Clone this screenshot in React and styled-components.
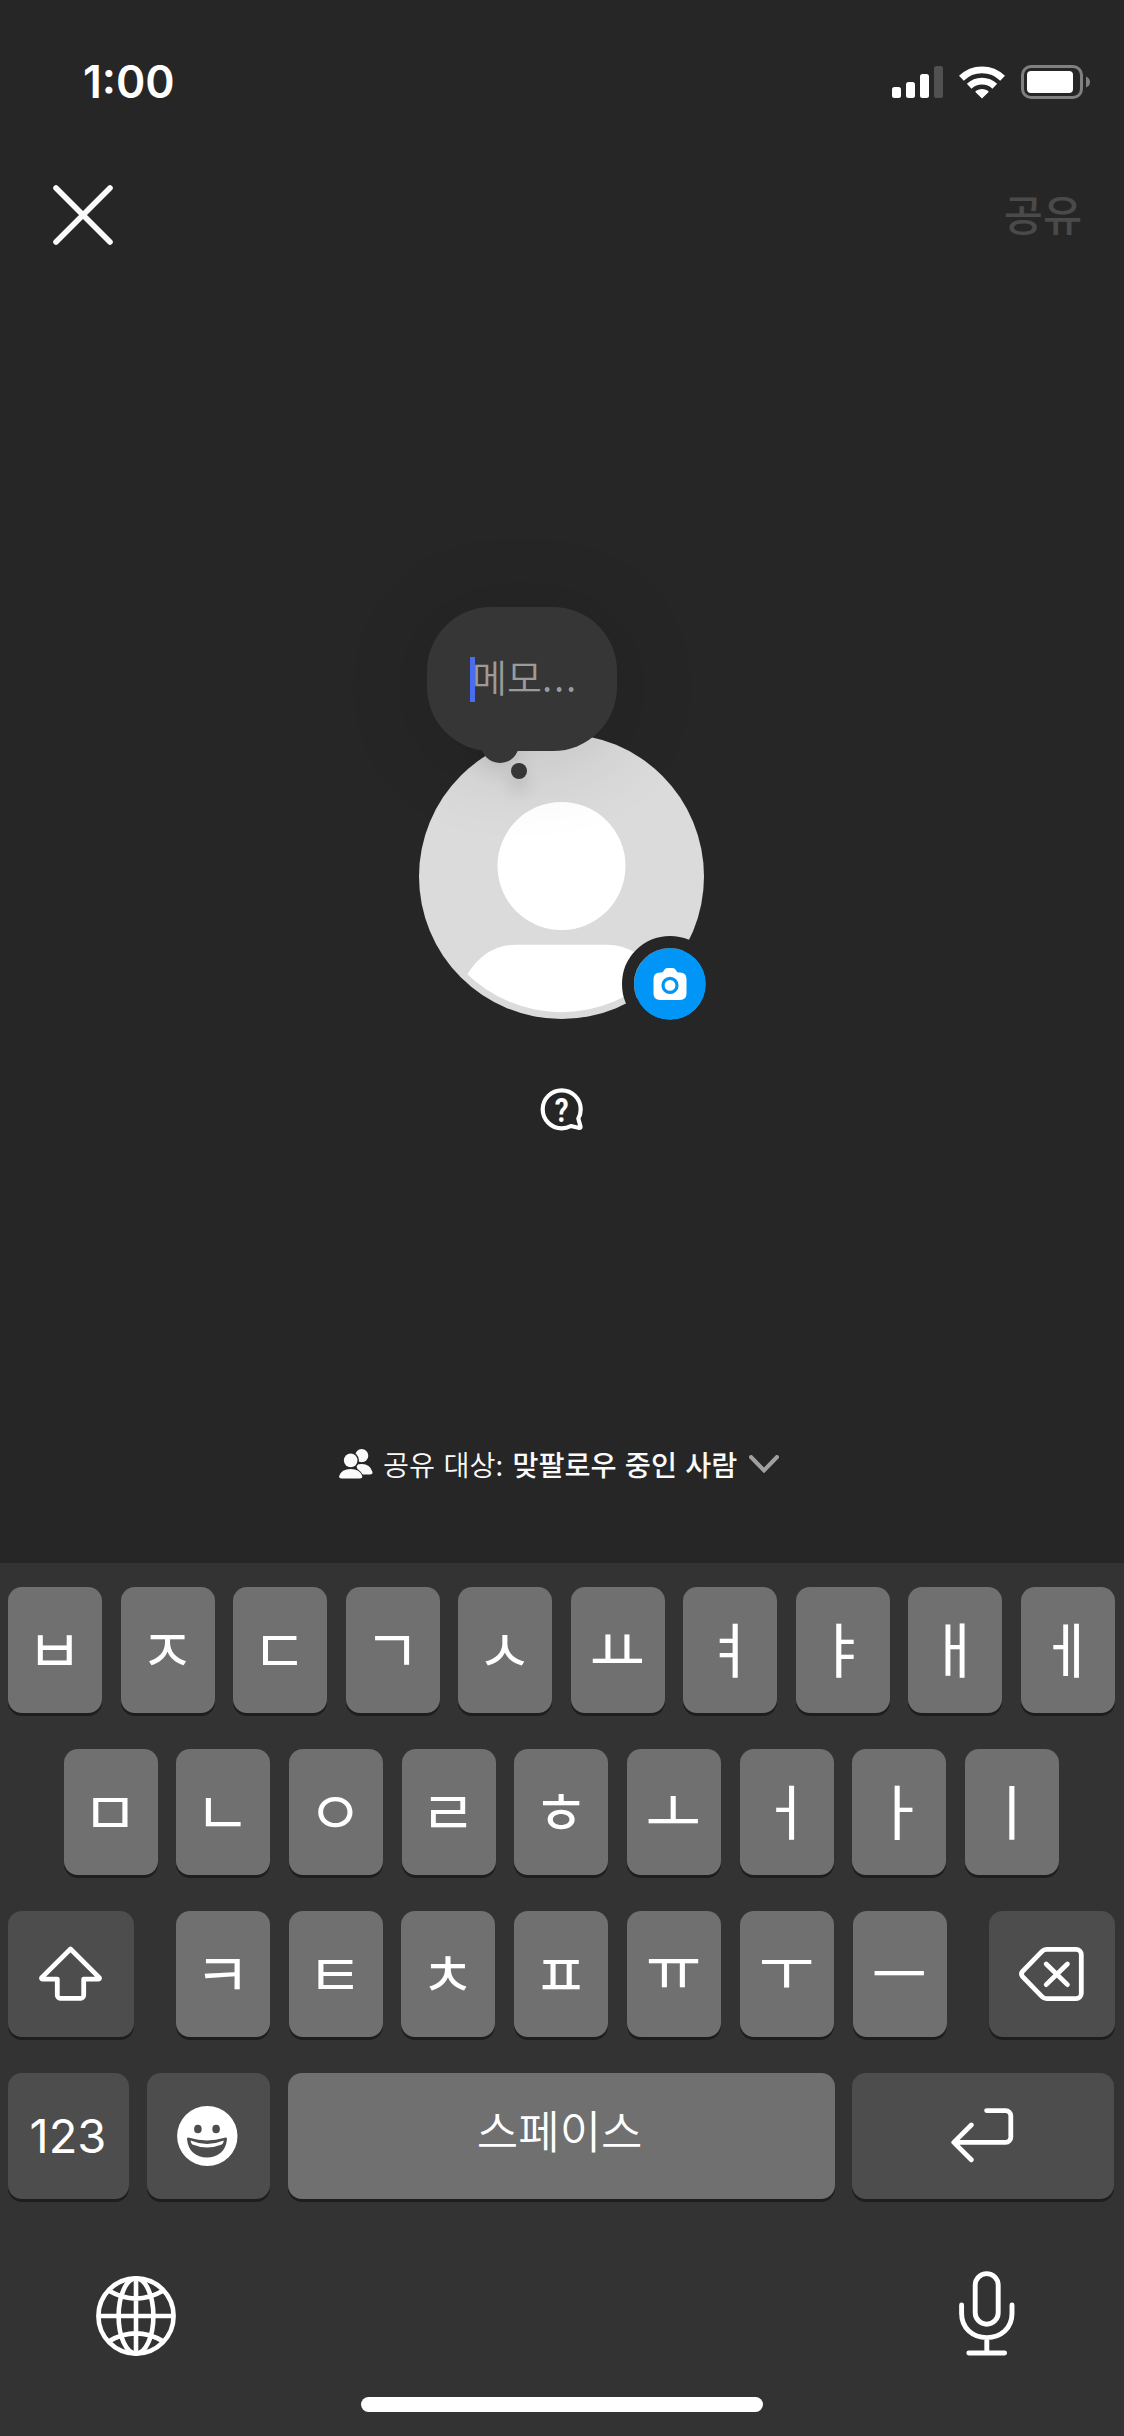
import styled, { createGlobalStyle } from 'styled-components';

const rowOne = ['ㅂ', 'ㅈ', 'ㄷ', 'ㄱ', 'ㅅ', 'ㅛ', 'ㅕ', 'ㅑ', 'ㅐ', 'ㅔ'];
const rowTwo = ['ㅁ', 'ㄴ', 'ㅇ', 'ㄹ', 'ㅎ', 'ㅗ', 'ㅓ', 'ㅏ', 'ㅣ'];
const rowThree = ['ㅋ', 'ㅌ', 'ㅊ', 'ㅍ', 'ㅠ', 'ㅜ', 'ㅡ'];
// vowels with a stem below the bar sit low in the font
const raised = ['ㅠ', 'ㅜ'];

const SignalIcon = () => (
  <svg width='51' height='32' viewBox='0 0 51 32' fill='#fff'>
    <rect x='0' y='21' width='9' height='11' rx='2.5' />
    <rect x='14' y='16' width='9' height='16' rx='2.5' />
    <rect x='28' y='8' width='9' height='24' rx='2.5' />
    <rect x='42' y='0' width='9' height='32' rx='2.5' fill='#515151' />
  </svg>
);

const WifiIcon = () => (
  <svg width='46' height='33' viewBox='0 0 46 33' fill='none'>
    <g stroke='#fff' strokeWidth='6.8'>
      <path d='M2.4 12.2A29.4 29.4 0 0 1 43.6 12.2' />
      <path d='M10.2 20.3A18.5 18.5 0 0 1 35.8 20.3' />
    </g>
    <path
      d='M23 32.5L16.6 26.3Q16 25.4 17 24.8Q23 21.2 29 24.8Q30 25.4 29.4 26.3Z'
      fill='#fff'
    />
  </svg>
);

const BatteryIcon = () => (
  <svg width='69' height='34' viewBox='0 0 69 34' fill='none'>
    <rect
      x='1.5'
      y='1.5'
      width='59'
      height='31'
      rx='8.5'
      stroke='#808080'
      strokeWidth='3'
    />
    <rect x='6' y='6' width='46' height='22' rx='4' fill='#fff' />
    <path d='M65 11.5Q69 13 69 17T65 22.5Z' fill='#808080' />
  </svg>
);

const CloseIcon = () => (
  <svg width='60' height='60' viewBox='0 0 60 60' fill='none'>
    <path
      d='M3 3L57 57M57 3L3 57'
      stroke='#fafafa'
      strokeWidth='5.6'
      strokeLinecap='round'
    />
  </svg>
);

const DefaultAvatar = () => (
  <svg width='285' height='285' viewBox='0 0 285 285'>
    <clipPath id='avatarInner'>
      <circle cx='142.5' cy='142.5' r='135.7' />
    </clipPath>
    <circle cx='142.5' cy='142.5' r='142.5' fill='#dbdbdb' />
    <circle cx='142.5' cy='132' r='64' fill='#fff' />
    <path
      clipPath='url(#avatarInner)'
      d='M48 241Q66 211 97 210.7H188Q219 211 237 241V285H48Z'
      fill='#fff'
    />
  </svg>
);

const CameraIcon = () => (
  <svg width='34' height='32' viewBox='0 0 34 32'>
    <path
      d='M7 4.5H8.2Q9.6 4.5 10.4 3.2L11 2.2Q12.2 0 14.6 0H19.4Q21.8 0 23 2.2L23.6 3.2Q24.4 4.5 25.8 4.5H27Q33.5 4.5 33.5 11V25.5Q33.5 32 27 32H7Q.5 32 .5 25.5V11Q.5 4.5 7 4.5Z'
      fill='#fff'
    />
    <circle cx='17' cy='17.4' r='7' fill='#fff' stroke='#0095f6' strokeWidth='3.2' />
  </svg>
);

const QuestionIcon = () => (
  <svg width='44' height='44' viewBox='0 0 44 44' fill='none'>
    <path
      d='M21.7 2.3A19 19 0 1 0 21.7 40.3Q26.5 40.3 30.9 38L39.5 40Q40.8 40 40.5 38.6L38.3 30.5Q40.7 26.6 40.7 21.3A19 19 0 0 0 21.7 2.3Z'
      stroke='#fff'
      strokeWidth='4.2'
      strokeLinejoin='round'
    />
    <text
      x='0'
      y='0'
      textAnchor='middle'
      transform='translate(21.7 33.6) scale(.82 1)'
      fontFamily='Roboto'
      fontWeight='700'
      fontSize='34'
      fill='#fff'
    >
      ?
    </text>
  </svg>
);

const PeopleIcon = () => (
  <svg width='34' height='30' viewBox='0 0 34 30' fill='#fafafa'>
    <circle cx='22.7' cy='6.7' r='6.6' />
    <path d='M17 15.5Q19 15 23 15Q31 15 33.4 22.8Q34 25.5 31 25.5H20Z' />
    <circle cx='11.7' cy='11.4' r='8.3' fill='#262626' />
    <path
      d='M0 27.2Q2.5 18.5 11.7 18.5Q20.8 18.5 24.6 27.2V30H0Z'
      fill='#262626'
    />
    <circle cx='11.7' cy='11.4' r='6.8' />
    <path d='M.2 27Q2.5 20 11.7 20T23.2 27Q23.8 29.6 21 29.6H2.4Q-.4 29.6 .2 27Z' />
  </svg>
);

const ChevronIcon = () => (
  <svg width='30' height='18' viewBox='0 0 30 18' fill='none'>
    <path
      d='M2 2L15 15.4L28 2'
      stroke='#a0a0a0'
      strokeWidth='4'
      strokeLinecap='round'
    />
  </svg>
);

const ShiftIcon = () => (
  <svg width='63' height='55' viewBox='0 0 63 55' fill='none'>
    <path
      d='M31.5 3L60.3 31.6Q61 33 59 33.1H44.7V49.3A3 3 0 0 1 41.7 52.3H21.3A3 3 0 0 1 18.3 49.3V33.1H4Q2 33 2.7 31.6Z'
      stroke='#fff'
      strokeWidth='4.8'
      strokeLinejoin='round'
    />
  </svg>
);

const DeleteIcon = () => (
  <svg width='65' height='54' viewBox='0 0 65 54' fill='none'>
    <path
      d='M27.5 2.4H57A5.3 5.3 0 0 1 62.3 7.7V46.3A5.3 5.3 0 0 1 57 51.6H27.5Q25 51.6 23 49.6L3.6 29.6Q1.4 27 3.6 24.4L23 4.4Q25 2.4 27.5 2.4Z'
      stroke='#fff'
      strokeWidth='4.8'
    />
    <path
      d='M27.2 17L48.4 37.6M48.4 17L27.2 37.6'
      stroke='#fff'
      strokeWidth='4.8'
      strokeLinecap='round'
    />
  </svg>
);

const SmileIcon = () => (
  <svg width='61' height='60' viewBox='0 0 61 60'>
    <ellipse cx='30.3' cy='30' rx='30.2' ry='30' fill='#fff' />
    <g fill='#4d4d4d'>
      <ellipse cx='20.9' cy='23' rx='3.8' ry='4.3' />
      <ellipse cx='39.1' cy='23' rx='3.8' ry='4.3' />
      <path d='M10 33Q10 31 12.4 31.8Q30 37 47.6 31.8Q50 31 50 33C49 45 41 51.5 30 51.5S11 45 10 33Z' />
    </g>
    <path
      d='M13.6 34.6Q30 41.5 46.8 34.6Q46.6 37.4 44.8 38.4Q30 44.4 15.4 38.4Q13.8 37.4 13.6 34.6Z'
      fill='#fff'
    />
  </svg>
);

const ReturnIcon = () => (
  <svg width='63' height='55' viewBox='0 0 63 55' fill='none'>
    <path
      d='M35.6 2.6H54.4A5.2 5.2 0 0 1 59.8 8V29A5.2 5.2 0 0 1 54.4 34.4H3M20.3 17L2.8 34.4L20.3 51.8'
      stroke='#fff'
      strokeWidth='4.8'
      strokeLinecap='round'
      strokeLinejoin='round'
    />
  </svg>
);

const GlobeIcon = () => (
  <svg width='80' height='80' viewBox='0 0 80 80' fill='none'>
    <g stroke='#fff' strokeWidth='4.6'>
      <circle cx='40' cy='40' r='37.6' />
      <ellipse cx='40' cy='40' rx='17.4' ry='37.6' />
      <path d='M40 2V78M2 40H78M13 14.8Q40 30.4 67 14.8M13 65.2Q40 49.6 67 65.2' />
    </g>
  </svg>
);

const MicIcon = () => (
  <svg width='56' height='85' viewBox='0 0 56 85' fill='none'>
    <g stroke='#fff' strokeWidth='4.9' strokeLinecap='round'>
      <rect x='16.2' y='2.6' width='23' height='50.6' rx='11.5' />
      <path d='M2.6 34V42.5C2.6 57 13.6 66.6 27.8 66.6S53 57 53 42.5V34M27.8 66.6V82M9.8 82H45.6' />
    </g>
  </svg>
);

const App = () => {
  return (
    <Screen>
      <GlobalStyle />
      {/* STATUS BAR */}
      <StatusBar>
        <Time>1:00</Time>
        <StatusIcons>
          <SignalIcon />
          <WifiIcon />
          <BatteryIcon />
        </StatusIcons>
      </StatusBar>
      {/* HEADER */}
      <Header>
        <IconButton type='button'>
          <CloseIcon />
        </IconButton>
        <ShareButton type='button'>공유</ShareButton>
      </Header>
      {/* NOTE */}
      <Main>
        <Profile>
          <DefaultAvatar />
          <Tail />
          <Bubble>
            <Caret />
            <Placeholder>
              메모<Dots>...</Dots>
            </Placeholder>
          </Bubble>
          <SmallDot />
          <CameraBadge>
            <CameraIcon />
          </CameraBadge>
        </Profile>
        <QuestionIcon />
      </Main>
      {/* AUDIENCE */}
      <Audience>
        <PeopleIcon />
        <AudienceText>
          공유 대상: <strong>맞팔로우 중인 사람</strong>
        </AudienceText>
        <ChevronIcon />
      </Audience>
      {/* KEYBOARD */}
      <Keyboard>
        <KeyRow>
          {rowOne.map((letter) => (
            <Key key={letter}>{letter}</Key>
          ))}
        </KeyRow>
        <KeyRow $inset={55.5}>
          {rowTwo.map((letter) => (
            <Key key={letter}>{letter}</Key>
          ))}
        </KeyRow>
        <KeyRow>
          <ActionKey $width={126}>
            <ShiftIcon />
          </ActionKey>
          <Letters>
            {rowThree.map((letter) => (
              <Key key={letter} $raised={raised.includes(letter)}>
                {letter}
              </Key>
            ))}
          </Letters>
          <ActionKey $width={126}>
            <DeleteIcon />
          </ActionKey>
        </KeyRow>
        <KeyRow>
          <ActionKey $width={121}>123</ActionKey>
          <ActionKey $width={123}>
            <SmileIcon />
          </ActionKey>
          <SpaceKey>스페이스</SpaceKey>
          <ActionKey $width={262}>
            <ReturnIcon />
          </ActionKey>
        </KeyRow>
        <KeyboardFooter>
          <GlobeIcon />
          <MicIcon />
        </KeyboardFooter>
        <HomeIndicator />
      </Keyboard>
    </Screen>
  );
};

const GlobalStyle = createGlobalStyle`
  * {
    box-sizing: border-box;
  }
  body {
    margin: 0;
    background: #262626;
  }
  svg {
    display: block;
    flex-shrink: 0;
  }
`;

const Screen = styled.div`
  display: flex;
  flex-direction: column;
  width: 1124px;
  height: 2436px;
  overflow: hidden;
  background: #262626;
  color: #fff;
  font-family: 'Inter', 'Noto Sans CJK KR', sans-serif;
`;

const StatusBar = styled.div`
  display: flex;
  justify-content: space-between;
  align-items: center;
  height: 164px;
  padding: 0 34px 0 83px;
`;

const Time = styled.span`
  font-size: 44.5px;
  font-weight: 600;
  line-height: 1;
`;

const StatusIcons = styled.div`
  display: flex;
  align-items: center;
  gap: 16px;
`;

const Header = styled.header`
  display: flex;
  justify-content: space-between;
  align-items: center;
  height: 102px;
  padding: 0 42px 0 53px;
`;

const IconButton = styled.button`
  padding: 0;
  border: none;
  background: none;
`;

const ShareButton = styled(IconButton)`
  padding-bottom: 4px;
  color: #4a4a4a;
  font-family: 'Noto Sans CJK KR', sans-serif;
  font-size: 42.5px;
  font-weight: 500;
  line-height: 60px;
`;

const Main = styled.main`
  display: flex;
  flex-direction: column;
  align-items: center;
  gap: 69px;
  height: 1183px;
  padding: 468px 1px 0 0;
`;

const Profile = styled.div`
  position: relative;
  width: 285px;
  height: 285px;
`;

/* the bubble, its tail and the badge lie over the avatar */
const Bubble = styled.div`
  position: absolute;
  top: -127px;
  left: 8px;
  display: flex;
  align-items: center;
  width: 190px;
  height: 144px;
  padding: 0 0 0 43px;
  border-radius: 64px;
  background: #363636;
`;

const Tail = styled.div`
  position: absolute;
  top: -127px;
  left: 8px;
  width: 190px;
  height: 144px;
  border-radius: 64px;
  box-shadow: 0 8px 80px 10px rgba(0, 0, 0, 0.1);

  &::after {
    content: '';
    position: absolute;
    left: 54px;
    bottom: -12px;
    width: 38px;
    height: 38px;
    border-radius: 50%;
    background: #363636;
    box-shadow: 0 8px 22px rgba(0, 0, 0, 0.1);
  }
`;

const SmallDot = styled.div`
  position: absolute;
  top: 29px;
  left: 92px;
  width: 16px;
  height: 16px;
  border-radius: 50%;
  background: #363636;
  box-shadow: 0 12px 16px rgba(0, 0, 0, 0.14);
`;

const Caret = styled.span`
  width: 5px;
  height: 45px;
  background: #4a6cf0;
`;

const Placeholder = styled.span`
  margin-left: -3px;
  padding-bottom: 6px;
  color: #9b9b9b;
  font-family: 'Noto Sans CJK KR', sans-serif;
  font-size: 38px;
  font-weight: 350;
  line-height: 56px;
  white-space: nowrap;
`;

const Dots = styled.span`
  letter-spacing: 1.8px;
`;

const CameraBadge = styled.div`
  position: absolute;
  top: 202px;
  left: 203px;
  display: flex;
  justify-content: center;
  align-items: center;
  width: 96px;
  height: 96px;
  border: 12px solid #262626;
  border-radius: 50%;
  background: #0095f6;
  background-clip: padding-box;
`;

const Audience = styled.div`
  display: flex;
  align-items: center;
  height: 30px;
  padding-left: 339px;
`;

const AudienceText = styled.span`
  margin: -1px 12px 0 10px;
  color: #fafafa;
  font-family: 'Noto Sans CJK KR', sans-serif;
  font-size: 28.3px;
  font-weight: 350;
  line-height: 30px;
  white-space: nowrap;
  word-spacing: 2px;

  strong {
    margin-left: 1px;
    font-weight: 500;
  }
`;

const Keyboard = styled.section`
  display: flex;
  flex-direction: column;
  gap: 36px;
  height: 873px;
  margin-top: auto;
  padding: 24px 9.5px 0 8px;
  background: #333;
`;

const KeyRow = styled.div`
  display: flex;
  justify-content: space-between;
  height: 126px;
  padding: 0 ${({ $inset = 0 }) => $inset}px;
`;

const Letters = styled.div`
  display: flex;
  justify-content: space-between;
  width: 771px;
`;

const Key = styled.div`
  display: flex;
  justify-content: center;
  align-items: center;
  width: 94px;
  height: 126px;
  padding: 0 1px ${({ $raised }) => ($raised ? 18 : 5)}px 0;
  border-radius: 14px;
  background: #707070;
  box-shadow: 0 3px 0 #1e1e1e;
  font-family: 'Noto Sans CJK KR', sans-serif;
  font-size: 60.5px;
  font-weight: 400;
  line-height: 1;
`;

const ActionKey = styled(Key)`
  width: ${({ $width }) => $width}px;
  padding-bottom: 1px;
  background: #4d4d4d;
  font-family: 'Inter', sans-serif;
  font-size: 47px;
`;

const SpaceKey = styled(Key)`
  width: 547px;
  padding: 0 3px 13px 0;
  font-size: 45px;
  font-weight: 350;
`;

const KeyboardFooter = styled.div`
  display: flex;
  justify-content: space-between;
  align-items: flex-end;
  height: 121px;
  padding: 0 99.5px 0 88px;
`;

const HomeIndicator = styled.div`
  align-self: center;
  width: 402px;
  height: 15px;
  margin: 5px 0 0 1px;
  border-radius: 8px;
  background: #fff;
`;

export default App;
